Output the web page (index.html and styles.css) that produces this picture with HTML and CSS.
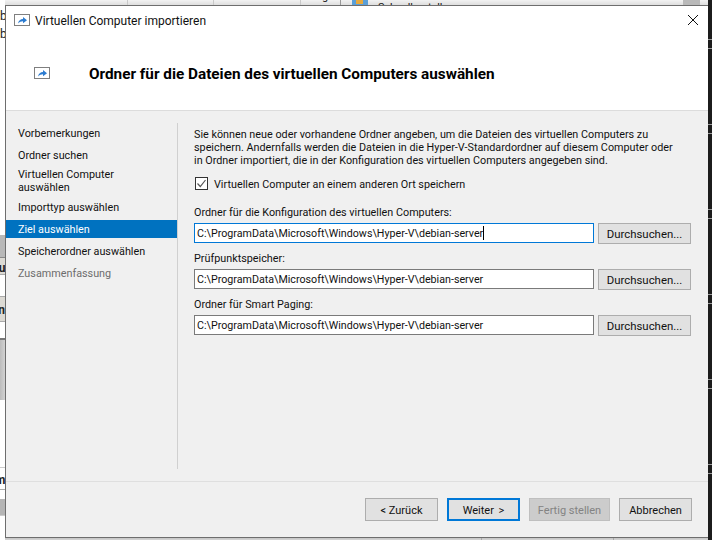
FILE: index.html
```html
<!DOCTYPE html>
<html lang="de">
<head>
<meta charset="utf-8">
<title>Virtuellen Computer importieren</title>
<link rel="stylesheet" href="styles.css">
</head>
<body>
<div class="backdrop" aria-hidden="true">
  <div class="bd-top">
    <span class="bd-g">g</span>
    <svg class="bd-icon" width="16" height="5" viewBox="0 0 16 5"><rect width="16" height="5" fill="#5a9fd8"/><rect x="4" y="0" width="7" height="4" fill="#e8a93c"/></svg>
    <span class="bd-text">Schnellerstellung</span>
    <span class="bd-thumb"></span>
  </div>
  <div class="bd-left">
    <div class="s s-b1">b</div>
    <div class="s s-b2">b</div>
    <div class="s s-w1"></div>
    <div class="s s-grey"></div>
    <div class="s s-beige s-a">ou</div>
    <div class="s s-w2"></div>
    <div class="s s-beige s-c">n</div>
    <div class="s s-w3"></div>
    <div class="s s-fade"></div>
    <div class="s s-w4"></div>
    <div class="s s-m">m</div>
    <div class="s s-w5"></div>
    <div class="s s-grey2"></div>
    <div class="s s-w6"></div>
  </div>
  <div class="bd-right"></div>
  <div class="bd-bottom"></div>
</div>
<main class="dialog">
  <div class="titlebar">
    <svg class="icon" width="16" height="12" viewBox="0 0 16 12"><rect x=".5" y=".5" width="15" height="11" fill="#fff" stroke="#7f7f7f"/><path d="M4 9.5C4.5 6.5 6.5 5 9 5V3l4 3.2-4 3V7.2C7 7.2 5.5 8 4 9.5z" fill="#2b7bd0"/></svg>
    <span class="title">Virtuellen Computer importieren</span>
    <svg class="close" width="10" height="10" viewBox="0 0 10 10"><path d="M0 0l10 10M10 0L0 10" stroke="#111" stroke-width="1" fill="none"/></svg>
  </div>
  <header class="banner">
    <svg class="icon banner-icon" width="16" height="12" viewBox="0 0 16 12"><rect x=".5" y=".5" width="15" height="11" fill="#fff" stroke="#7f7f7f"/><path d="M4 9.5C4.5 6.5 6.5 5 9 5V3l4 3.2-4 3V7.2C7 7.2 5.5 8 4 9.5z" fill="#2b7bd0"/></svg>
    <h1>Ordner für die Dateien des virtuellen Computers auswählen</h1>
  </header>
  <div class="body">
    <nav class="steps">
      <div class="step">Vorbemerkungen</div>
      <div class="step">Ordner suchen</div>
      <div class="step two">Virtuellen Computer auswählen</div>
      <div class="step">Importtyp auswählen</div>
      <div class="step active">Ziel auswählen</div>
      <div class="step">Speicherordner auswählen</div>
      <div class="step muted">Zusammenfassung</div>
    </nav>
    <section class="content">
      <p class="intro">Sie können neue oder vorhandene Ordner angeben, um die Dateien des virtuellen Computers zu speichern. Andernfalls werden die Dateien in die Hyper-V-Standardordner auf diesem Computer oder in Ordner importiert, die in der Konfiguration des virtuellen Computers angegeben sind.</p>
      <div class="check">
        <svg class="box" width="13" height="13" viewBox="0 0 13 13"><rect x=".5" y=".5" width="12" height="12" fill="#fff" stroke="#333"/><path d="M2.5 6.5l2.8 3L10.5 3" fill="none" stroke="#555" stroke-width="1.2"/></svg>
        <span class="check-text">Virtuellen Computer an einem anderen Ort speichern</span>
      </div>
      <div class="field">
        <label>Ordner für die Konfiguration des virtuellen Computers:</label>
        <div class="row">
          <div class="input focus">C:\ProgramData\Microsoft\Windows\Hyper-V\debian-server<i class="caret"></i></div>
          <div class="btn browse">Durchsuchen...</div>
        </div>
      </div>
      <div class="field">
        <label>Prüfpunktspeicher:</label>
        <div class="row">
          <div class="input">C:\ProgramData\Microsoft\Windows\Hyper-V\debian-server</div>
          <div class="btn browse">Durchsuchen...</div>
        </div>
      </div>
      <div class="field">
        <label>Ordner für Smart Paging:</label>
        <div class="row">
          <div class="input">C:\ProgramData\Microsoft\Windows\Hyper-V\debian-server</div>
          <div class="btn browse">Durchsuchen...</div>
        </div>
      </div>
    </section>
  </div>
  <footer class="footer">
    <div class="btn nav">&lt; Zurück</div>
    <div class="btn nav default">Weiter &gt;</div>
    <div class="btn nav wide disabled">Fertig stellen</div>
    <div class="btn nav">Abbrechen</div>
  </footer>
</main>
</body>
</html>
```
FILE: styles.css
```css
* { box-sizing: border-box; }
html, body { margin: 0; height: 100%; }
body {
  width: 712px;
  height: 540px;
  overflow: hidden;
  position: relative;
  background: #d9d9d9;
  padding: 5px 4px 2px 5px;
  font-family: "Roboto", "Open Sans", sans-serif;
  font-size: 10.8px;
  color: #111;
}
.backdrop { position: absolute; inset: 0; overflow: hidden; }
.bd-top {
  position: absolute; left: 0; top: 0; right: 0; height: 5px;
  background:
    linear-gradient(#c9c9c9, #c9c9c9) 127px 0 / 1px 5px no-repeat,
    linear-gradient(#c9c9c9, #c9c9c9) 213px 0 / 1px 5px no-repeat,
    linear-gradient(#c9c9c9, #c9c9c9) 300px 0 / 1px 5px no-repeat,
    linear-gradient(#999, #999) 340px 0 / 1px 5px no-repeat,
    linear-gradient(#f2f2f2, #dedede);
}
.bd-g { position: absolute; left: 322px; top: -10px; line-height: 13px; }
.bd-icon { position: absolute; left: 352px; top: 0; }
.bd-text { position: absolute; left: 378px; top: 1px; line-height: 13px; white-space: nowrap; }
.bd-thumb { position: absolute; left: 683px; top: 0; width: 17px; height: 5px; background: #b9b9b9; }
.bd-left { position: absolute; left: 0; top: 0; width: 5px; height: 540px; overflow: hidden; background: #fff; display: flex; flex-direction: column; }
.s { flex: none; font-size: 12px; white-space: nowrap; color: #222; line-height: 1; font-weight: 700; }
.s-b1 { height: 18px; padding-top: 10px; font-weight: 400; }
.s-b2 { height: 18px; padding-top: 10px; font-weight: 400; }
.s-w1 { height: 199px; }
.s-grey { height: 23px; background: #b8b8b8; border-bottom: 1px solid #888; }
.s-beige { background: #dcdad4; text-align: right; padding-top: 4px; }
.s-a { height: 17px; margin-left: -8px; border-bottom: 1px solid #aaa; }
.s-w2 { height: 22px; border-bottom: 1px solid #aaa; }
.s-c { height: 25px; margin-left: -4px; padding-top: 7px; border-bottom: 1px solid #aaa; }
.s-w3 { height: 18px; border-bottom: 2px solid #777; }
.s-fade { height: 60px; background: linear-gradient(90deg, #bcbcbc, #d2d2d2); }
.s-w4 { height: 68px; border-bottom: 1px solid #ccc; }
.s-m { height: 22px; margin-left: -5px; padding-top: 6px; border-bottom: 1px solid #aaa; }
.s-w5 { height: 9px; }
.s-grey2 { height: 16px; background: #b5b5b5; }
.s-w6 { height: 23px; border-top: 1px solid #ccc; }
.bd-right {
  position: absolute; right: 0; top: 0; bottom: 0; width: 4px;
  background: #1c1c1c repeating-linear-gradient(#1c1c1c 0, #1c1c1c 39px, #9a9a9a 39px, #9a9a9a 40px, #1c1c1c 40px, #1c1c1c 48px, #9a9a9a 48px, #9a9a9a 49px, #1c1c1c 49px, #1c1c1c 85px);
}
.bd-bottom {
  position: absolute; left: 5px; right: 4px; bottom: 0; height: 3px;
  background:
    linear-gradient(#a9a9a9, #a9a9a9) 476px 0 / 1px 3px no-repeat,
    linear-gradient(#a9a9a9, #a9a9a9) 608px 0 / 1px 3px no-repeat,
    linear-gradient(#bdbdbd, #d5d5d5);
}
.dialog {
  position: relative;
  height: 533px;
  border: 1px solid #6e6e6e;
  border-right: 0;
  background: #f0f0f0;
  display: flex;
  flex-direction: column;
}
.titlebar {
  height: 29px;
  background: #fff;
  display: flex;
  align-items: center;
  padding: 0 10px 1px 8px;
  gap: 5px;
}
.title { flex: 1; font-size: 12px; padding-top: 1px; }
.banner {
  height: 76px;
  background: #fff;
  border-bottom: 1px solid #dcdcdc;
  display: flex;
  align-items: center;
  padding: 3px 0 0 28px;
}
.banner-icon { margin-right: 39px; margin-top: -2px; }
h1 { margin: 0; font-size: 15.3px; font-weight: 700; color: #000; }
.body { flex: 1; display: flex; padding-top: 12px; min-height: 0; }
.steps { width: 171px; flex: none; }
.step {
  height: 22px;
  padding-left: 12px;
  padding-top: 1px;
  line-height: 20px;
}
.step.two { height: 30px; line-height: 13px; padding-top: 1px; padding-right: 50px; }
.step.active { background: #0072c0; color: #fff; height: 18px; padding-top: 0; line-height: 19px; margin: 1px 0 3px; }
.step.muted { color: #6d6d6d; }
.content {
  flex: 1;
  border-left: 1px solid #d0d0d0;
  margin-bottom: 12px;
  padding: 0 16px;
}
.intro { margin: 5px 0 0; line-height: 13px; width: 484px; }
.check { display: flex; align-items: center; gap: 6px; margin-top: 10px; padding-left: 1px; height: 13px; }
.check-text { padding-top: 2px; }
.box { flex: none; }
.field { margin-top: 14px; }
label { display: block; line-height: 18px; height: 16px; margin-bottom: 3px; }
.field + .field { margin-top: 6px; }
.row { display: flex; gap: 4px; }
.input {
  width: 400px;
  flex: none;
  height: 20px;
  background: #fff;
  border: 1px solid #7a7a7a;
  line-height: 20px;
  padding-left: 2px;
  font-size: 10.7px;
  white-space: nowrap;
  overflow: hidden;
}
.input.focus { border-color: #0078d7; }
.caret { display: inline-block; width: 1px; height: 14px; background: #000; vertical-align: -3px; }
.btn {
  background: #e1e1e1;
  border: 1px solid #adadad;
  text-align: center;
  white-space: nowrap;
}
.browse { width: 93px; flex: none; height: 21px; line-height: 21px; font-size: 11.4px; }
.footer {
  height: 56px;
  flex: none;
  border-top: 1px solid #dfdfdf;
  display: flex;
  justify-content: flex-end;
  align-items: flex-start;
  gap: 9px;
  padding: 16px 16px 0 0;
}
.nav { width: 73px; height: 23px; line-height: 23px; font-size: 11px; }
.wide { width: 81px; }
.default { border: 2px solid #0078d7; line-height: 21px; word-spacing: 2px; }
.disabled { background: #cccccc; border-color: #bfbfbf; color: #838383; }
```
